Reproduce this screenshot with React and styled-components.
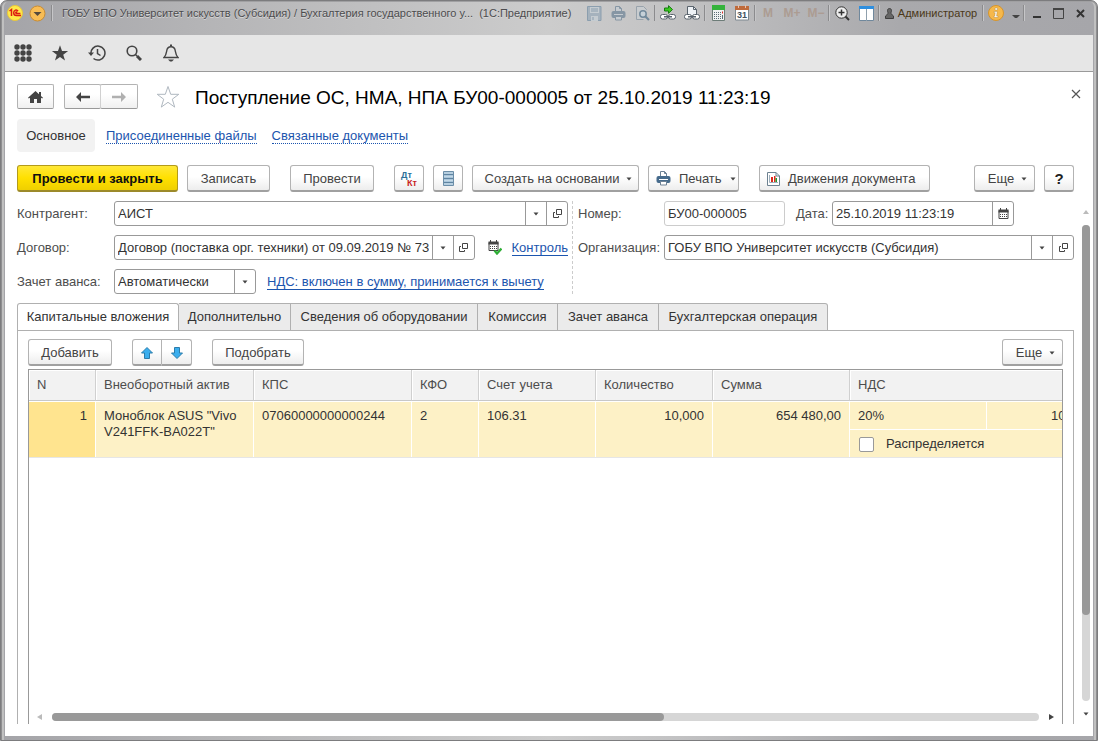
import React from "react";
import styled, { createGlobalStyle, css } from "styled-components";

const GlobalStyle = createGlobalStyle`
  *, *::before, *::after { box-sizing: border-box; }
  body {
    margin: 0;
    background: #fff;
    color: #333;
    font: 13px/16px "Liberation Sans", Arial, sans-serif;
  }
  button, input, select { font: inherit; color: inherit; margin: 0; }
  svg { display: block; flex: none; }
`;

const Window = styled.div`
  display: flex;
  flex-direction: column;
  min-height: 100vh;
  padding: 0 4px 4px;
  border: 1px solid #7c7c7e;
  border-radius: 7px 7px 0 0;
  background: linear-gradient(90deg, #a4a4a8 0%, #b4b4b6 18%, #cccccc 50%, #c4c4c5 60%, #a9a9ac 82%, #a6a6aa 100%);
  box-shadow: inset 0 1px 0 #a0a0a2, inset 1px 0 0 #8e8e90, inset -1px 0 0 #8e8e90, inset -3px 0 0 #c0c0c0, inset 3px 0 0 #c0c0c0;
`;

const TitleBar = styled.header`
  display: flex;
  align-items: center;
  height: 34px;
  padding: 0 1px 10px 0;
`;

const TitleText = styled.div`
  flex: 1;
  min-width: 0;
  padding-left: 9px;
  overflow: hidden;
  white-space: pre;
  font-size: 11px;
  color: #4c4c4e;
  text-shadow: 0 1px 0 #d6d6d6;
`;

const Separator = styled.span`
  width: 2px;
  height: 16px;
  border-left: 1px solid #8b8b8d;
  border-right: 1px solid #c6c6c8;
`;

const TitleButton = styled.button`
  display: flex;
  align-items: center;
  justify-content: center;
  gap: 4px;
  width: ${(p) => p.$width || 24}px;
  height: 22px;
  padding: 0;
  border: 0;
  background: none;
  font-size: ${(p) => (p.$bold ? 12 : 11)}px;
  white-space: nowrap;
  color: ${(p) => p.$color || "#333"};
  font-weight: ${(p) => (p.$bold ? 700 : 400)};
`;

const Toolbar = styled.nav`
  display: flex;
  height: 37px;
  background: #e6e6e6;
  border-bottom: 1px solid #9a9a9a;
`;

const ToolButton = styled.button`
  display: flex;
  align-items: center;
  justify-content: center;
  width: 37px;
  padding: 0 1px 0 0;
  border: 0;
  background: none;
`;

const Page = styled.main`
  flex: 1;
  display: flex;
  flex-direction: column;
  padding: 12px 0 12px 12px;
  background: #fff;
`;

const TitleRow = styled.div`
  display: flex;
  align-items: center;
  height: 25px;
  padding-right: 9px;
`;

const NavButton = styled.button`
  display: flex;
  align-items: center;
  justify-content: center;
  width: 37px;
  height: 25px;
  padding: 0;
  border: 1px solid #b3b3b3;
  border-bottom-color: #999;
  border-radius: 2px;
  background: linear-gradient(#fff 40%, #f0f0f0);
  & + & { border-left-color: #d0d0d0; margin-left: -1px; width: 38px; }
`;

const NavPair = styled.div`
  display: flex;
  margin: 0 18px 0 10px;
`;

const PlainButton = styled.button`
  display: flex;
  padding: 0;
  border: 0;
  background: none;
`;

const Heading = styled.h1`
  flex: 1;
  margin: 0 0 0 15px;
  padding-top: 2px;
  font-size: 19px;
  line-height: 24px;
  font-weight: 400;
  color: #000;
  white-space: nowrap;
`;

const Links = styled.nav`
  display: flex;
  align-items: center;
  gap: 15px;
  height: 33px;
  margin: 10px 0 13px;
`;

const CurrentLink = styled.span`
  width: 78px;
  margin-right: -4px;
  line-height: 33px;
  text-align: center;
  border-radius: 4px;
  background: #f2f2f2;
`;

const Link = styled.a`
  color: #1c55ae;
  white-space: nowrap;
  text-decoration: none;
  line-height: 15px;
  border-bottom: 1px ${(p) => (p.$dotted ? "dotted" : "solid")} #1c55ae;
`;

const CommandBar = styled.div`
  display: flex;
  align-items: center;
  gap: 20px;
  margin-right: 19px;
`;

const Group = styled.div`
  display: flex;
  gap: ${(p) => (p.$joined ? 0 : 9)}px;
  ${(p) => p.$end && css`margin-left: auto;`}
  ${(p) => p.$joined && css`
    & > button:first-child { border-top-right-radius: 0; border-bottom-right-radius: 0; }
    & > button:last-child { border-left: 0; border-top-left-radius: 0; border-bottom-left-radius: 0; }
  `}
`;

const Button = styled.button`
  display: flex;
  align-items: center;
  justify-content: ${(p) => (p.$icon ? "flex-start" : "center")};
  gap: ${(p) => (p.$icon ? 8 : 7)}px;
  width: ${(p) => p.$width}px;
  height: 27px;
  padding: 1px 0 0 ${(p) => (p.$icon ? 7 : p.$menu ? 6 : 0)}px;
  border: 1px solid #b3b3b3;
  border-bottom: 2px solid #a0a0a0;
  border-radius: 3px;
  background: linear-gradient(#fff 45%, #ededed);
  color: #444;
  white-space: nowrap;
  ${(p) => p.$primary && css`
    border-color: #b39b1b;
    border-bottom-color: #9c8a2a;
    background: linear-gradient(#ffe838, #ffe000 50%, #efcf00);
    color: #111;
    font-weight: 700;
  `}
  ${(p) => p.$help && css`
    font-size: 15px;
    font-weight: 700;
    color: #222;
  `}
`;

const Posting = styled.span`
  display: grid;
  width: 16px;
  font-size: 9px;
  line-height: 8px;
  font-weight: 700;
  color: #2b6f99;
  text-align: left;
  & > b { color: #c81e1e; justify-self: end; }
`;

const Body = styled.div`
  flex: 1;
  display: flex;
  margin-top: 9px;
`;

const Content = styled.div`
  flex: 1;
  min-width: 0;
  display: flex;
  flex-direction: column;
`;

const Form = styled.form`
  display: grid;
  grid-template-columns: 556fr 501fr;
`;

const FormColumn = styled.div`
  display: flex;
  flex-direction: column;
  gap: 9px;
  ${(p) => p.$left
    ? css`padding-right: 4px; border-right: 1px dashed #ccc;`
    : css`padding-left: 5px;`}
`;

const FieldRow = styled.div`
  display: flex;
  align-items: center;
  height: 25px;
`;

const Label = styled.label`
  width: ${(p) => p.$width}px;
  flex: none;
  color: #4d4d4d;
  white-space: nowrap;
`;

const Gap = styled.span`
  flex: none;
  width: 11px;
`;

const Field = styled.span`
  display: flex;
  ${(p) => (p.$width ? css`width: ${p.$width}px;` : css`flex: 1;`)}
  min-width: 0;
  height: 25px;
  border: 1px solid ${(p) => (p.$pale ? "#ccc" : "#999")};
  border-radius: 3px;
  background: #fff;
  overflow: hidden;
`;

const Input = styled.input`
  flex: 1;
  min-width: 0;
  width: 100%;
  padding: 0 3px;
  border: 0;
  outline: 0;
  background: none;
`;

const SelectBox = styled.span`
  display: grid;
  width: 100%;
  align-items: center;
  & > * { grid-area: 1 / 1; }
  & > span { justify-self: end; pointer-events: none; height: 100%; }
`;

const Select = styled.select`
  appearance: none;
  width: 100%;
  height: 100%;
  padding: 0 3px;
  border: 0;
  outline: 0;
  background: none;
`;

const fieldPart = css`
  display: flex;
  align-items: center;
  justify-content: center;
  flex: none;
  width: 21px;
  padding: 0;
  border: 0;
  border-left: 1px solid #999;
  background: none;
`;
const FieldButton = styled.button`${fieldPart}`;
const FieldMark = styled.span`${fieldPart}`;

const CheckIcon = styled.span`
  margin: 0 10px 0 13px;
`;

const Tabs = styled.div`
  display: flex;
  margin-top: 9px;
`;

const Tab = styled.button`
  width: ${(p) => p.$width}px;
  height: 28px;
  margin: 0 0 -1px;
  padding: 0;
  border: 1px solid #b0b0b0;
  border-left-width: ${(p) => (p.$active ? 1 : 0)}px;
  border-radius: ${(p) => (p.$active ? "3px 3px 0 0" : p.$last ? "0 3px 0 0" : "0")};
  border-bottom-color: ${(p) => (p.$active ? "#fff" : "#b0b0b0")};
  background: ${(p) => (p.$active ? "#fff" : "#ebebeb")};
  white-space: nowrap;
`;

const Panel = styled.section`
  flex: 1;
  display: flex;
  flex-direction: column;
  padding: 8px 10px 0;
  border: 1px solid #b0b0b0;
  border-bottom: 0;
`;

const PanelBar = styled.div`
  display: flex;
  gap: 20px;
  margin-bottom: 3px;
`;

const Grid = styled.div`
  flex: 1;
  display: flex;
  flex-direction: column;
  overflow: hidden;
  border: 1px solid #999;
  border-bottom: 0;
`;

const GridView = styled.div`
  flex: 1;
  overflow: hidden;
`;

const Table = styled.table`
  width: 1096px;
  table-layout: fixed;
  border-collapse: separate;
  border-spacing: 0;
  border-bottom: 1px solid #e6e6e6;
`;

const Th = styled.th`
  height: 31px;
  padding: 0 8px;
  border-right: 1px solid #d0d0d0;
  border-bottom: 1px solid #c8c8c8;
  box-shadow: inset 1px 1px 0 #fff;
  background: #f2f2f2;
  color: #4d4d4d;
  font-weight: 400;
  text-align: left;
`;

const Td = styled.td`
  height: 28px;
  padding: 6px 8px 0;
  vertical-align: top;
  border-top: 1px solid #fff;
  border-right: 1px solid #fff;
  background: ${(p) => (p.$current ? "#ffe48f" : "#fdf1c6")};
  text-align: ${(p) => (p.$num ? "right" : "left")};
  white-space: ${(p) => (p.$wrap ? "normal" : "nowrap")};
`;

const CheckLabel = styled.label`
  display: flex;
  align-items: center;
  gap: 12px;
`;

const Checkbox = styled.input`
  appearance: none;
  width: 15px;
  height: 15px;
  margin: 0 0 0 1px;
  border: 1px solid #999;
  border-radius: 2px;
  background: #fff;
`;

const HScroll = styled.div`
  display: flex;
  align-items: center;
  gap: 9px;
  height: 14px;
  padding: 0 8px;
`;

const VScroll = styled.div`
  display: flex;
  flex-direction: column;
  align-items: center;
  gap: 10px;
  width: 19px;
  padding: 8px 0 7px 4px;
`;

const Track = styled.div`
  flex: 1;
  ${(p) => (p.$vertical ? "width" : "height")}: 8px;
  border-radius: 4px;
  background: #d6d6d6;
`;

const Thumb = styled.div`
  width: ${(p) => (p.$vertical ? "100%" : "62%")};
  height: ${(p) => (p.$vertical ? "82%" : "100%")};
  border-radius: 4px;
  background: #999;
`;

const Caret = ({ size = 6, dir = "down", color = "#444" }) => {
  const shapes = {
    down: "M.5 1.500h5L3 4.500z",
    up: "M0 5h6L3 1z",
    left: "M5 0v6L0 3z",
    right: "M1 0v6l5-3z",
  };
  return (
    <svg width={size} height={size} viewBox="0 0 6 6"><path d={shapes[dir]} fill={color} /></svg>
  );
};

const OpenIcon = () => (
  <svg width="11" height="11" viewBox="0 0 11 11" fill="none" stroke="#444">
    <path d="M4.500 1.500h5v5h-5zM3 4.500H1.500v5h5V8" />
  </svg>
);

const LogoIcon = () => (
  <svg width="16" height="16" viewBox="0 0 16 16">
    <circle cx="8" cy="8" r="7.500" fill="#ffe94a" stroke="#e9c63a" />
    <path d="M2.500 6l2-1.500V11M11 6.200C9.800 4.200 6.700 4.800 6.700 7.700c0 2 1.300 2.800 2.800 2.800H14M10.200 7.300c-1.400-.8-2 .8-.8 1.300h4" fill="none" stroke="#dc1c13" strokeWidth="1.500" />
  </svg>
);

const OrangeMenuIcon = () => (
  <svg width="17" height="17" viewBox="0 0 17 17">
    <circle cx="8.500" cy="8.500" r="7.500" fill="#f8bd55" stroke="#c98c32" />
    <path d="M4.500 7h8l-4 4z" fill="#554a3c" />
  </svg>
);

const SaveIcon = () => (
  <svg width="15" height="15" viewBox="0 0 15 15">
    <path d="M.5.500h13.500v14H.5z" fill="#a5b2bd" stroke="#8b9eae" />
    <path d="M3 1h9v6H3zM4 10h7v5H4z" fill="#c5ccd1" />
    <path d="M4 3h7M4 5h7M6 11v3" stroke="#8b9eae" />
  </svg>
);

const PrinterIcon = ({ body = "#8696a4", paper = "#c6cbd0", line = "#8696a4" }) => (
  <svg width="15" height="15" viewBox="0 0 15 15">
    <path d="M4.500 6V.500h4l2 2V6" fill={paper} stroke={line} />
    <path d="M8.500.500v2h2" fill="none" stroke={line} />
    <rect x=".5" y="5" width="14" height="7" rx="2" fill={body} />
    <path d="M3 8.500h9" stroke={paper} />
    <path d="M4.500 10.500h6v3.500h-6z" fill={paper} stroke={line} />
  </svg>
);

const PreviewIcon = () => (
  <svg width="15" height="15" viewBox="0 0 15 15" fill="none">
    <path d="M11.500 4V3.500l-3-3h-7v13h7" fill="#c8cccf" stroke="#98a2ab" />
    <circle cx="8" cy="8" r="3.200" fill="#c5d0d8" stroke="#71899b" strokeWidth="1.500" />
    <path d="M10.500 10.500l3.500 3.500" stroke="#71899b" strokeWidth="2.200" />
  </svg>
);

const Chain = ({ y }) => (
  <g fill="#fff" stroke="#59636d">
    <rect x=".5" y={y} width="7" height="4.500" rx="2" />
    <rect x="8.500" y={y} width="7" height="4.500" rx="2" />
    <path d={`M4 ${y + 2.250}h8`} strokeWidth="1.500" />
  </g>
);

const LinkInIcon = () => (
  <svg width="16" height="16" viewBox="0 0 16 16">
    <path d="M4.500 3h4V.700l4 3.800-4 3.800V6h-4z" fill="#3ccc22" stroke="#157c10" />
    <Chain y={9.5} />
  </svg>
);

const LinkPrintIcon = () => (
  <svg width="16" height="16" viewBox="0 0 16 16">
    <path d="M3.500 10V1.500h6l3 3V10" fill="#eef2f6" stroke="#59636d" />
    <path d="M9.500 1.500v3h3" fill="none" stroke="#59636d" />
    <Chain y={9.5} />
  </svg>
);

const CalcIcon = () => (
  <svg width="13" height="16" viewBox="0 0 13 16">
    <path d="M.5.500h12v15H.5z" fill="#f0f2f2" stroke="#6d7c78" />
    <path d="M0 0h13v5H0z" fill="#35b33c" />
    <path d="M2 7.500h7M2 9.500h7M2 11.500h7M2 13.500h7" stroke="#5a6b75" strokeDasharray="1 1" />
    <path d="M10.500 6.500v2" stroke="#e02626" /><path d="M10.500 10v4" stroke="#5a6b75" />
  </svg>
);

const SmallText = styled.text`
  font: 700 9px "Liberation Sans", sans-serif;
  text-anchor: middle;
  fill: #41525e;
`;

const Calendar31Icon = () => (
  <svg width="14" height="16" viewBox="0 0 14 16">
    <path d="M.5 1.500h13v13.500H.5z" fill="#fff" stroke="#7d8890" />
    <path d="M0 1h14v4H0z" fill="#bf6b3c" />
    <path d="M3.500 0v3M10.500 0v3" stroke="#e8c3ad" />
    <SmallText x="7" y="13">31</SmallText>
  </svg>
);

const ZoomIcon = () => (
  <svg width="15" height="15" viewBox="0 0 15 15" fill="none" stroke="#333">
    <circle cx="6.500" cy="6.500" r="5.700" fill="#eee" />
    <path d="M3.500 6.500h6M6.500 3.500v6" strokeWidth="1.500" /><path d="M10.500 10.500l3.500 3.500" strokeWidth="2" />
  </svg>
);

const PanelsIcon = () => (
  <svg width="15" height="15" viewBox="0 0 15 15">
    <path d="M.5.500h14v14H.5z" fill="#fff" stroke="#70889c" />
    <path d="M0 0h15v3H0z" fill="#2f8fdf" /><path d="M7.500 3v12" stroke="#8fa0ad" />
  </svg>
);

const UserIcon = () => (
  <svg width="9" height="11" viewBox="0 0 9 11">
    <path d="M2.500 2.500C2.500-.2 6.500-.2 6.500 2.500c0 1.500-.6 2-.6 3L8.500 8v2.500H.5V8l2.600-2.500c0-1-.6-1.500-.6-3z" fill="#666" stroke="#3f3f3f" />
  </svg>
);

const InfoIcon = () => (
  <svg width="16" height="16" viewBox="0 0 16 16">
    <circle cx="8" cy="8" r="7.500" fill="#f6b84b" stroke="#d6952d" />
    <path d="M7 3h2.500v2H7zM6 6.500h3.200L8.600 11H10v1.300H6V11h.8l.4-3.300H6z" fill="#fff" stroke="#a5803f" strokeWidth=".4" />
  </svg>
);

const MenuGridIcon = () => (
  <svg width="18" height="18" viewBox="0 0 18 18" fill="#444">
    {[3, 9, 15].map((y) => [3, 9, 15].map((x) => <circle key={`${x}-${y}`} cx={x} cy={y} r="2.700" />))}
  </svg>
);

const StarIcon = ({ size, ...rest }) => (
  <svg width={size} height={size} viewBox="0 0 24 24" {...rest}>
    <path d="M12 1.500l2.700 7.800h8.100l-6.500 4.900 2.400 7.900L12 17.300l-6.700 4.800 2.400-7.900-6.500-4.900h8.100z" />
  </svg>
);

const HistoryIcon = () => (
  <svg width="18" height="16" viewBox="0 0 18 16" fill="none" stroke="#444" strokeWidth="1.500">
    <path d="M3 9a7 7 0 1 1 2.500 4.500" /><path d="M9.500 4v4.500l3 2" /><path d="M0 7.500h6L3 11z" fill="#444" stroke="none" />
  </svg>
);

const SearchIcon = () => (
  <svg width="16" height="16" viewBox="0 0 16 16" fill="none" stroke="#444">
    <circle cx="6" cy="6" r="4.800" strokeWidth="1.600" /><path d="M9.500 9.500l1.500 1.500" strokeWidth="1.500" /><path d="M11 11l4 4" strokeWidth="3" />
  </svg>
);

const BellIcon = () => (
  <svg width="16" height="18" viewBox="0 0 16 18" fill="none" stroke="#444" strokeWidth="1.400">
    <path d="M1 13.500h14c-2-1.800-2.200-3.500-2.700-6.500C12 4.200 10.500 2.800 8 2.800S4 4.200 3.700 7c-.5 3-.7 4.700-2.700 6.500z" />
    <path d="M8 .5v2" strokeWidth="2" /><path d="M5 15.500h6l-2 2H7z" fill="#444" stroke="none" />
  </svg>
);

const HomeIcon = () => (
  <svg width="15" height="12" viewBox="0 0 15 12" fill="#444">
    <path d="M7.500 0L11 3.200V1h2v4l2 1.800-.8.800L13 6.800V12H9V8H6v4H2V6.800l-1.200.8L0 6.800z" />
  </svg>
);

const ArrowIcon = ({ flip, color }) => (
  <svg width="14" height="10" viewBox="0 0 14 10">
    <path d={flip ? "M14 5L9 0v3.800H0v2.400h9V10z" : "M0 5l5-5v3.800h9v2.400H5V10z"} fill={color} />
  </svg>
);

const BlueArrow = ({ down }) => (
  <svg width="12" height="12" viewBox="0 0 12 12">
    <path d={down ? "M6 11.500L11.500 6H8.500V.500h-5V6H.5z" : "M6 .500L11.500 6H8.500v5.500h-5V6H.5z"} fill="#3aaeee" stroke="#2b7cab" />
  </svg>
);

const RegisterIcon = () => (
  <svg width="11" height="15" viewBox="0 0 11 15">
    <path d="M.5.500h10v14H.5z" fill="#a9c5da" stroke="#6c8ea8" />
    <path d="M1 3.500h9M1 7.500h9M1 11.500h9" stroke="#5f84a1" />
    <path d="M1 2h9M1 5.500h9M1 9.500h9M1 13h9" stroke="#c3d8e6" />
  </svg>
);

const ReportIcon = () => (
  <svg width="13" height="14" viewBox="0 0 13 14">
    <path d="M.5.500h8.500l3.500 3.500v9.500H.5z" fill="#fff" stroke="#6d8291" />
    <path d="M9 .5V4h3.500" fill="none" stroke="#6d8291" />
    <path d="M2.500 3v7.500H11" fill="none" stroke="#9fb0bc" />
    <path d="M4 5h2v5H4z" fill="#dd2a1c" /><path d="M7 4h1.500v6H7z" fill="#dd2a1c" /><path d="M8.500 6H10v4H8.500z" fill="#1f9a2a" />
  </svg>
);

const CalendarIcon = ({ checked }) => (
  <svg width={checked ? 14 : 11} height={checked ? 15 : 11} viewBox={checked ? "0 0 14 15" : "0 0 11 11"}>
    <path d="M1 2.500h9v8H1z" fill="#fff" stroke="#444" />
    <path d="M.5 1.500h10v3H.5z" fill="#444" /><path d="M2.500 0v2M8.500 0v2" stroke="#444" />
    <path d="M2 6.500h7M2 8.500h7" stroke="#444" strokeDasharray="1 1" />
    {checked && <path d="M6.500 10.500l2.500 3 4.500-5" fill="none" stroke="#2eae35" strokeWidth="2.300" />}
  </svg>
);

const LookupButtons = () => (
  <>
    <FieldButton type="button" aria-label="Выбрать"><Caret /></FieldButton>
    <FieldButton type="button" aria-label="Открыть"><OpenIcon /></FieldButton>
  </>
);

const tabs = [
  ["Капитальные вложения", 162],
  ["Дополнительно", 112],
  ["Сведения об оборудовании", 187],
  ["Комиссия", 80],
  ["Зачет аванса", 101],
  ["Бухгалтерская операция", 169],
];

const columnWidths = [67, 158, 158, 67, 117, 117, 137, 137, 138];

export default function App() {
  return (
    <>
      <GlobalStyle />
      <Window>
        <TitleBar>
          <TitleButton $width={19} aria-label="1С"><LogoIcon /></TitleButton>
          <TitleButton $width={27} aria-label="Главное меню"><OrangeMenuIcon /></TitleButton>
          <Separator />
          <TitleText>{"ГОБУ ВПО Университет искусств (Субсидия) / Бухгалтерия государственного у...  (1С:Предприятие)"}</TitleText>
          <TitleButton aria-label="Сохранить"><SaveIcon /></TitleButton>
          <TitleButton aria-label="Печать"><PrinterIcon /></TitleButton>
          <TitleButton aria-label="Предварительный просмотр"><PreviewIcon /></TitleButton>
          <Separator />
          <TitleButton aria-label="Перейти по ссылке"><LinkInIcon /></TitleButton>
          <TitleButton aria-label="Получить ссылку"><LinkPrintIcon /></TitleButton>
          <Separator />
          <TitleButton aria-label="Калькулятор"><CalcIcon /></TitleButton>
          <TitleButton aria-label="Календарь"><Calendar31Icon /></TitleButton>
          <Separator />
          <TitleButton $bold $color="#ac9c92">M</TitleButton>
          <TitleButton $bold $color="#ac9c92">M+</TitleButton>
          <TitleButton $bold $color="#ac9c92">M−</TitleButton>
          <Separator />
          <TitleButton aria-label="Масштаб"><ZoomIcon /></TitleButton>
          <TitleButton aria-label="Панели"><PanelsIcon /></TitleButton>
          <Separator />
          <TitleButton $width={102} $color="#4a3818"><UserIcon />Администратор</TitleButton>
          <Separator />
          <TitleButton aria-label="Справка"><InfoIcon /></TitleButton>
          <TitleButton $width={15} aria-label="Ещё">
            <svg width="8" height="12" viewBox="0 0 8 12"><path d="M0 8h8L5 11H3z" fill="#444" /></svg>
          </TitleButton>
          <Separator />
          <TitleButton aria-label="Свернуть">
            <svg width="8" height="12" viewBox="0 0 8 12"><path d="M0 9h8v2H0z" fill="#333" /></svg>
          </TitleButton>
          <TitleButton $width={19} aria-label="Развернуть">
            <svg width="11" height="11" viewBox="0 0 11 11"><path d="M.5 1v9.500h10V1" fill="none" stroke="#444" /><path d="M0 1h11" stroke="#444" strokeWidth="2" /></svg>
          </TitleButton>
          <TitleButton aria-label="Закрыть">
            <svg width="9" height="9" viewBox="0 0 9 9"><path d="M1 1l7 7M8 1L1 8" stroke="#333" strokeWidth="2" /></svg>
          </TitleButton>
        </TitleBar>

        <Toolbar>
          <ToolButton aria-label="Функции"><MenuGridIcon /></ToolButton>
          <ToolButton aria-label="Избранное"><StarIcon size={18} fill="#444" /></ToolButton>
          <ToolButton aria-label="История"><HistoryIcon /></ToolButton>
          <ToolButton aria-label="Поиск"><SearchIcon /></ToolButton>
          <ToolButton aria-label="Оповещения"><BellIcon /></ToolButton>
        </Toolbar>

        <Page>
          <TitleRow>
            <NavButton aria-label="Начальная страница"><HomeIcon /></NavButton>
            <NavPair>
              <NavButton aria-label="Назад"><ArrowIcon color="#444" /></NavButton>
              <NavButton aria-label="Вперед"><ArrowIcon flip color="#b0b0b0" /></NavButton>
            </NavPair>
            <PlainButton aria-label="В избранное"><StarIcon size={24} fill="#fff" stroke="#b0b8c0" /></PlainButton>
            <Heading>Поступление ОС, НМА, НПА БУ00-000005 от 25.10.2019 11:23:19</Heading>
            <PlainButton aria-label="Закрыть документ">
              <svg width="13" height="17" viewBox="0 0 13 17"><path d="M1 1l8 8M9 1L1 9" transform="translate(0 1)" stroke="#555" strokeWidth="1.200" /></svg>
            </PlainButton>
          </TitleRow>

          <Links>
            <CurrentLink>Основное</CurrentLink>
            <Link $dotted href="#files">Присоединенные файлы</Link>
            <Link $dotted href="#related">Связанные документы</Link>
          </Links>

          <CommandBar>
            <Group>
              <Button $primary $width={161}>Провести и закрыть</Button>
              <Button $width={83}>Записать</Button>
            </Group>
            <Button $width={84}>Провести</Button>
            <Group>
              <Button $width={30}><Posting>Дт<b>Кт</b></Posting></Button>
              <Button $width={30} aria-label="Реестр"><RegisterIcon /></Button>
              <Button $menu $width={167}>Создать на основании<Caret /></Button>
              <Button $icon $width={91}><PrinterIcon body="#466b8c" paper="#fff" line="#6c8195" />Печать<Caret /></Button>
            </Group>
            <Button $icon $width={171}><ReportIcon />Движения документа</Button>
            <Group $end>
              <Button $menu $width={61}>Еще<Caret /></Button>
              <Button $help $width={30}>?</Button>
            </Group>
          </CommandBar>

          <Body>
            <Content>
              <Form>
                <FormColumn $left>
                  <FieldRow>
                    <Label $width={97} htmlFor="partner">Контрагент:</Label>
                    <Field><Input id="partner" defaultValue="АИСТ" /><LookupButtons /></Field>
                  </FieldRow>
                  <FieldRow>
                    <Label $width={97} htmlFor="contract">Договор:</Label>
                    <Field><Input id="contract" defaultValue="Договор (поставка орг. техники) от 09.09.2019 № 73" /><LookupButtons /></Field>
                    <CheckIcon><CalendarIcon checked /></CheckIcon>
                    <Link href="#control">Контроль</Link>
                  </FieldRow>
                  <FieldRow>
                    <Label $width={97} htmlFor="advance">Зачет аванса:</Label>
                    <Field $width={142}>
                      <SelectBox>
                        <Select id="advance"><option>Автоматически</option></Select>
                        <FieldMark><Caret /></FieldMark>
                      </SelectBox>
                    </Field>
                    <Gap />
                    <Link href="#vat">НДС: включен в сумму, принимается к вычету</Link>
                  </FieldRow>
                </FormColumn>
                <FormColumn>
                  <FieldRow>
                    <Label $width={86} htmlFor="number">Номер:</Label>
                    <Field $pale $width={121}><Input id="number" defaultValue="БУ00-000005" /></Field>
                    <Gap />
                    <Label $width={36} htmlFor="date">Дата:</Label>
                    <Field $width={182}>
                      <Input id="date" defaultValue="25.10.2019 11:23:19" />
                      <FieldButton type="button" aria-label="Выбрать дату"><CalendarIcon /></FieldButton>
                    </Field>
                  </FieldRow>
                  <FieldRow>
                    <Label $width={86} htmlFor="org">Организация:</Label>
                    <Field><Input id="org" defaultValue="ГОБУ ВПО Университет искусств (Субсидия)" /><LookupButtons /></Field>
                  </FieldRow>
                </FormColumn>
              </Form>

              <Tabs role="tablist">
                {tabs.map(([name, width], i) => (
                  <Tab key={name} role="tab" aria-selected={i === 0} $width={width} $active={i === 0} $last={i === tabs.length - 1}>{name}</Tab>
                ))}
              </Tabs>
              <Panel>
                <PanelBar>
                  <Button $width={84}>Добавить</Button>
                  <Group $joined>
                    <Button $width={30} aria-label="Вверх"><BlueArrow /></Button>
                    <Button $width={30} aria-label="Вниз"><BlueArrow down /></Button>
                  </Group>
                  <Button $width={92}>Подобрать</Button>
                  <Group $end><Button $menu $width={61}>Еще<Caret /></Button></Group>
                </PanelBar>
                <Grid>
                  <GridView>
                    <Table>
                      <colgroup>{columnWidths.map((w, i) => <col key={i} width={w} />)}</colgroup>
                      <thead>
                        <tr>
                          <Th>N</Th><Th>Внеоборотный актив</Th><Th>КПС</Th><Th>КФО</Th>
                          <Th>Счет учета</Th><Th>Количество</Th><Th>Сумма</Th><Th colSpan={2}>НДС</Th>
                        </tr>
                      </thead>
                      <tbody>
                        <tr>
                          <Td rowSpan={2} $num $current>1</Td>
                          <Td rowSpan={2} $wrap>Моноблок ASUS "Vivo V241FFK-BA022T"</Td>
                          <Td rowSpan={2}>07060000000000244</Td>
                          <Td rowSpan={2}>2</Td>
                          <Td rowSpan={2}>106.31</Td>
                          <Td rowSpan={2} $num>10,000</Td>
                          <Td rowSpan={2} $num>654 480,00</Td>
                          <Td>20%</Td>
                          <Td $num>109 080,00</Td>
                        </tr>
                        <tr>
                          <Td colSpan={2}><CheckLabel><Checkbox type="checkbox" />Распределяется</CheckLabel></Td>
                        </tr>
                      </tbody>
                    </Table>
                  </GridView>
                  <HScroll>
                    <Caret dir="left" color="#bbb" />
                    <Track><Thumb /></Track>
                    <Caret dir="right" />
                  </HScroll>
                </Grid>
              </Panel>
            </Content>
            <VScroll>
              <Caret dir="up" color="#bbb" />
              <Track $vertical><Thumb $vertical /></Track>
              <Caret />
            </VScroll>
          </Body>
        </Page>
      </Window>
    </>
  );
}
